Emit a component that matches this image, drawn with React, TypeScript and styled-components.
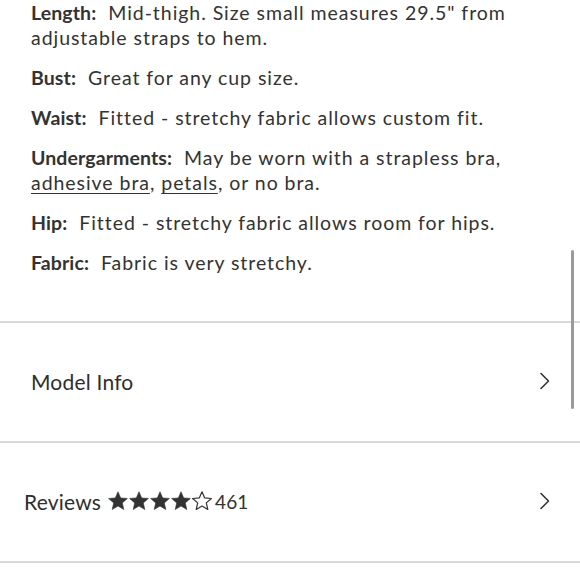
import styled, { createGlobalStyle } from "styled-components";

const GlobalStyle = createGlobalStyle`
  html, body {
    margin: 0;
    padding: 0;
    background: #fff;
  }
  body {
    font-family: Lato, "Open Sans", Arial, sans-serif;
    color: #333;
    -webkit-font-smoothing: antialiased;
  }
`;

const Page = styled.main`
  width: 580px;
  min-height: 580px;
  position: relative;
  overflow: hidden;
`;

const Details = styled.section`
  padding: 0 24px 0 31px;
  height: 321px;
  box-sizing: border-box;
`;

const Spec = styled.p`
  margin: 0 0 15px;
  font-size: 19.5px;
  line-height: 25px;
  letter-spacing: 0.95px;
  color: #333;
`;

const Label = styled.strong`
  font-weight: 700;
  letter-spacing: 0.1px;
  margin-right: 6px;
`;

const Link = styled.a`
  color: inherit;
  text-decoration: underline;
  text-underline-offset: 3px;
  text-decoration-thickness: 1px;
`;

const Row = styled.div<{ $indent: number }>`
  height: 120px;
  box-sizing: border-box;
  border-top: 2px solid #d9d9d9;
  display: flex;
  align-items: center;
  padding: 0 29px 2px ${({ $indent }) => $indent}px;
`;

const RowBody = styled.div`
  flex: 1;
  display: flex;
  align-items: center;
`;

const RowTitle = styled.span`
  font-size: 21px;
  letter-spacing: 0.2px;
  color: #2e2e2e;
  margin-right: 7px;
`;

const Stars = styled.span`
  display: flex;
  align-items: center;
  gap: 1px;
`;

const Count = styled.span`
  font-size: 19px;
  color: #333;
  margin-left: 3px;
`;

const LastRule = styled.div`
  border-top: 2px solid #d9d9d9;
`;

const Scrollbar = styled.div`
  position: absolute;
  right: 6px;
  top: 250px;
  width: 3px;
  height: 159px;
  border-radius: 2px;
  background: #9a9a9a;
`;

const Chevron = () => (
  <svg width="12" height="18" viewBox="0 0 12 18" fill="none">
    <path d="M2 1.5 L9.5 9 L2 16.5" stroke="#333" strokeWidth="1.6" strokeLinecap="round" strokeLinejoin="round" />
  </svg>
);

const STAR = "M10 0.8 L12.7 6.9 L19.4 7.5 L14.3 11.9 L15.8 18.5 L10 15 L4.2 18.5 L5.7 11.9 L0.6 7.5 L7.3 6.9 Z";

const Star = ({ filled }: { filled: boolean }) => (
  <svg width="20" height="20" viewBox="0 0 20 20">
    <path
      d={STAR}
      fill={filled ? "#333" : "none"}
      stroke="#333"
      strokeWidth={filled ? 0.6 : 1.2}
      strokeLinejoin="round"
    />
  </svg>
);

export default function App() {
  const rating = 4;
  return (
    <Page>
      <GlobalStyle />
      <Details>
        <Spec>
          <Label>Length:</Label> Mid-thigh. Size small measures 29.5" from adjustable straps to hem.
        </Spec>
        <Spec>
          <Label>Bust:</Label> Great for any cup size.
        </Spec>
        <Spec>
          <Label>Waist:</Label> Fitted - stretchy fabric allows custom fit.
        </Spec>
        <Spec>
          <Label>Undergarments:</Label> May be worn with a strapless bra, <Link href="#">adhesive bra</Link>,{" "}
          <Link href="#">petals</Link>, or no bra.
        </Spec>
        <Spec>
          <Label>Hip:</Label> Fitted - stretchy fabric allows room for hips.
        </Spec>
        <Spec>
          <Label>Fabric:</Label> Fabric is very stretchy.
        </Spec>
      </Details>
      <Row $indent={31}>
        <RowBody>
          <RowTitle>Model Info</RowTitle>
        </RowBody>
        <Chevron />
      </Row>
      <Row $indent={24}>
        <RowBody>
          <RowTitle>Reviews</RowTitle>
          <Stars>
            {[0, 1, 2, 3, 4].map((i) => (
              <Star key={i} filled={i < rating} />
            ))}
          </Stars>
          <Count>461</Count>
        </RowBody>
        <Chevron />
      </Row>
      <LastRule />
      <Scrollbar />
    </Page>
  );
}
